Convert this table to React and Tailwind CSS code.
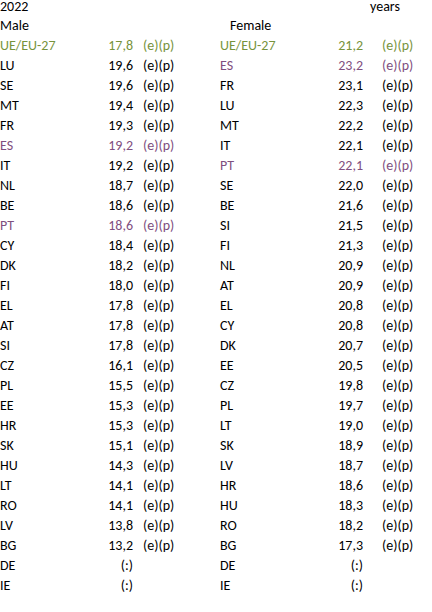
const GREEN = 'text-[#77933c]'
const PURPLE = 'text-[#7f4f80]'

// [country, value, flag, colour]
const male = [
  ['UE/EU-27', '17,8', true, 'g'],
  ['LU', '19,6', true],
  ['SE', '19,6', true],
  ['MT', '19,4', true],
  ['FR', '19,3', true],
  ['ES', '19,2', true, 'p'],
  ['IT', '19,2', true],
  ['NL', '18,7', true],
  ['BE', '18,6', true],
  ['PT', '18,6', true, 'p'],
  ['CY', '18,4', true],
  ['DK', '18,2', true],
  ['FI', '18,0', true],
  ['EL', '17,8', true],
  ['AT', '17,8', true],
  ['SI', '17,8', true],
  ['CZ', '16,1', true],
  ['PL', '15,5', true],
  ['EE', '15,3', true],
  ['HR', '15,3', true],
  ['SK', '15,1', true],
  ['HU', '14,3', true],
  ['LT', '14,1', true],
  ['RO', '14,1', true],
  ['LV', '13,8', true],
  ['BG', '13,2', true],
  ['DE', '(:)', false],
  ['IE', '(:)', false],
]

const female = [
  ['UE/EU-27', '21,2', true, 'g'],
  ['ES', '23,2', true, 'p'],
  ['FR', '23,1', true],
  ['LU', '22,3', true],
  ['MT', '22,2', true],
  ['IT', '22,1', true],
  ['PT', '22,1', true, 'p'],
  ['SE', '22,0', true],
  ['BE', '21,6', true],
  ['SI', '21,5', true],
  ['FI', '21,3', true],
  ['NL', '20,9', true],
  ['AT', '20,9', true],
  ['EL', '20,8', true],
  ['CY', '20,8', true],
  ['DK', '20,7', true],
  ['EE', '20,5', true],
  ['CZ', '19,8', true],
  ['PL', '19,7', true],
  ['LT', '19,0', true],
  ['SK', '18,9', true],
  ['LV', '18,7', true],
  ['HR', '18,6', true],
  ['HU', '18,3', true],
  ['RO', '18,2', true],
  ['BG', '17,3', true],
  ['DE', '(:)', false],
  ['IE', '(:)', false],
]

function tone(c) {
  if (c === 'g') return GREEN
  if (c === 'p') return PURPLE
  return 'text-black'
}

export default function App() {
  return (
    <div
      className="min-h-screen bg-white text-[14px] leading-[20px] text-black"
      style={{ fontFamily: 'Carlito, Calibri, Lato, sans-serif' }}
    >
      <div className="grid grid-cols-[100px_33px_87px_110px_33px_auto]">
        <div className="h-[16px] leading-[13px]">2022</div>
        <div />
        <div />
        <div />
        <div />
        <div className="h-[16px] pl-[7px] leading-[13px]">years</div>

        <div>Male</div>
        <div />
        <div />
        <div className="pl-[10px]">Female</div>
        <div />
        <div />

        {male.map((m, i) => {
          const f = female[i]
          const mc = tone(m[3])
          const fc = tone(f[3])
          return [
            <div key={`a${i}`} className={mc}>{m[0]}</div>,
            <div key={`b${i}`} className={`text-right ${mc}`}>{m[1]}</div>,
            <div key={`c${i}`} className={`pl-[10px] ${mc}`}>{m[2] ? '(e)(p)' : ''}</div>,
            <div key={`d${i}`} className={fc}>{f[0]}</div>,
            <div key={`e${i}`} className={`text-right ${fc}`}>{f[1]}</div>,
            <div key={`f${i}`} className={`pl-[19px] ${fc}`}>{f[2] ? '(e)(p)' : ''}</div>,
          ]
        })}
      </div>
    </div>
  )
}
